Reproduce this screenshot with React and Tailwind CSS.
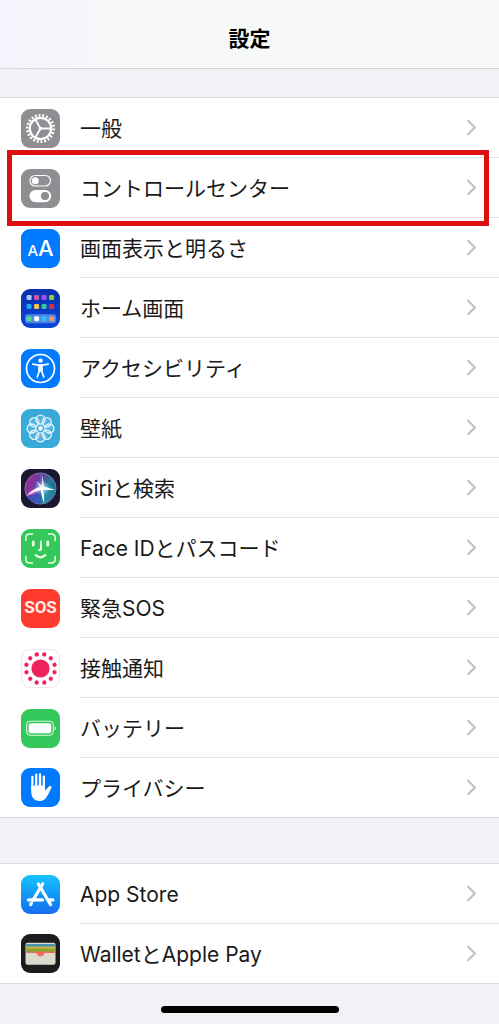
import { ChevronRight } from "lucide-react";

function Icon({ children, className }) {
    return (
        <svg viewBox="0 0 39 39" className={"h-[39px] w-[39px] shrink-0 rounded-[9px] " + className} aria-hidden="true">
            {children}
        </svg>
    )
}

function GeneralIcon() {
    return (
        <Icon className="bg-[#8e8e93]">
            <g fill="none" stroke="#fff">
                <circle cx="19.5" cy="19.5" r="13.2" strokeWidth="2.8" pathLength="88" strokeDasharray="2 2" />
                <circle cx="19.5" cy="19.5" r="10.7" strokeWidth="2.2" />
                <path d="M19.5 19.5H30M19.5 19.5L14.2 10.3M19.5 19.5L14.2 28.7" strokeWidth="1.8" />
            </g>
            <circle cx="19.5" cy="19.5" r="1.8" fill="#fff" />
        </Icon>
    )
}

function ControlCenterIcon() {
    return (
        <Icon className="bg-[#8e8e93]">
            <rect x="9" y="6.5" width="20.5" height="10.5" rx="5.25" fill="none" stroke="#fff" strokeWidth="1.2" />
            <circle cx="14.3" cy="11.8" r="3.5" fill="#fff" />
            <rect x="8.4" y="21" width="21.8" height="12.2" rx="6.1" fill="#fff" />
            <circle cx="24" cy="27.1" r="4.1" fill="#8e8e93" />
        </Icon>
    )
}

function DisplayIcon() {
    return (
        <span className="flex h-[39px] w-[39px] shrink-0 items-baseline justify-center rounded-[9px] bg-[#007aff] leading-[38px] font-medium text-white" aria-hidden="true">
            <span className="text-[15px]">A</span>
            <span className="text-[22px]">A</span>
        </span>
    )
}

function HomeScreenIcon() {
    const rows = [
        { y: 6, colors: ["#a9c8ff", "#d8579a", "#9a55ee", "#8fca3c"] },
        { y: 15, colors: ["#19a9f5", "#f7c544", "#32c6a4", "#d62f4c"] },
        { y: 27.2, colors: ["#55d98a", "#ffffff", "#38bdf8", "#e59a63"] },
    ]
    return (
        <Icon className="bg-linear-to-b from-[#0a2fae] to-[#0b46d8]">
            <rect x="4" y="25.2" width="31" height="9" rx="2.5" fill="#4b86e8" />
            {rows.map((row) => row.colors.map((color, i) => (
                <rect key={color} x={5.6 + i * 7.5} y={row.y} width="5" height="5" rx="1.3" fill={color} />
            )))}
        </Icon>
    )
}

function AccessibilityIcon() {
    return (
        <Icon className="bg-[#007aff]">
            <circle cx="19.5" cy="19.5" r="14" fill="none" stroke="#fff" strokeWidth="1.7" />
            <circle cx="19.5" cy="11.6" r="2.2" fill="#fff" />
            <path d="M17.4 15.6H21.6V22.4H17.4Z" fill="#fff" />
            <path d="M11.8 15.2L17.5 16.2H21.5L27.2 15.2M18.3 17V22L16.2 28M20.7 17V22L22.8 28" fill="none" stroke="#fff" strokeWidth="1.7" strokeLinecap="round" />
        </Icon>
    )
}

function WallpaperIcon() {
    return (
        <Icon className="bg-[#38a9d9]">
            <g fill="#ffffff22" stroke="#e4f6ff" strokeWidth="1.4">
                {[0, 45, 90, 135, 180, 225, 270, 315].map((angle) => (
                    <circle key={angle} cx="19.5" cy="10.6" r="4.5" transform={`rotate(${angle} 19.5 19.5)`} />
                ))}
            </g>
            <circle cx="19.5" cy="19.5" r="2.4" fill="#e4f6ff" />
        </Icon>
    )
}

function SiriIcon() {
    return (
        <Icon className="bg-[#19182f]">
            <defs>
                <linearGradient id="siriOrb" x1="0" y1="0.2" x2="1" y2="0.8">
                    <stop offset="0" stopColor="#a8238c" />
                    <stop offset="0.35" stopColor="#6b3fa6" />
                    <stop offset="0.65" stopColor="#207f9c" />
                    <stop offset="1" stopColor="#253a86" />
                </linearGradient>
                <radialGradient id="siriGlow">
                    <stop offset="0" stopColor="#fff" />
                    <stop offset="0.4" stopColor="#d9eaff" stopOpacity="0.6" />
                    <stop offset="1" stopColor="#8ac8ff" stopOpacity="0" />
                </radialGradient>
            </defs>
            <circle cx="19.5" cy="19.5" r="15.6" fill="url(#siriOrb)" stroke="#8f88b4" strokeWidth="0.8" />
            <path d="M19 4.2C22 8 23 14 22 19C27 15 31 17 34.6 20C33 29 27 34 21 34.8C24 27 22 23 21 20Z" fill="#2bc4b6" opacity="0.4" />
            <path d="M6 28C8 31 12 34.5 19 35C20 30 20 26 20.5 21C15 22 10 24 6 28Z" fill="#3a49c8" opacity="0.6" />
            <path d="M5 26C10 20 16 18 21 19C17 24 12 27 5 26Z" fill="#ff64c8" opacity="0.6" />
            <circle cx="21" cy="19" r="8" fill="url(#siriGlow)" />
            <path d="M6 27C11 21 15 19 21 17.5C26 18 30 20 34 21C29 21 25 21 22 20.5C23 25 23.5 29 23 34C21 29 20.5 25 20 21C15 22 10 24 6 27Z" fill="#fff" />
            <path d="M20 19L15 12L21 17L21.5 6L23 18Z" fill="#eef5ff" />
        </Icon>
    )
}

function FaceIdIcon() {
    return (
        <Icon className="bg-[#34c759]">
            <g fill="none" stroke="#e9ffe9" strokeLinecap="round" strokeLinejoin="round">
                <path d="M4.8 11.5V9Q4.8 5 8.8 5H11.5M27.5 5H30.2Q34.2 5 34.2 9V11.5M34.2 27.5V30Q34.2 34 30.2 34H27.5M11.5 34H8.8Q4.8 34 4.8 30V27.5" strokeWidth="1.6" />
                <path d="M12.2 13V16.2M26.8 13V16.2" strokeWidth="2.8" />
                <path d="M20 12.5V19.3Q20 21.2 18 21.2" strokeWidth="2" />
                <path d="M14.6 26.2Q19.5 30.4 24.4 26.2" strokeWidth="2.2" />
            </g>
        </Icon>
    )
}

function SosIcon() {
    return (
        <span className="flex h-[39px] w-[39px] shrink-0 items-center justify-center rounded-[9px] bg-[#ff3b30] font-[Roboto,sans-serif] text-[17px] font-bold text-[#fff1e8]" aria-hidden="true">
            SOS
        </span>
    )
}

function ExposureIcon() {
    return (
        <Icon className="border border-[#e8e8ec] bg-white">
            <g fill="#f0245c">
                <circle cx="19.5" cy="19.5" r="9.6" />
                {[15, 45, 75, 105, 135, 165, 195, 225, 255, 285, 315, 345].map((angle) => (
                    <circle key={angle} cx="19.5" cy="4.2" r="2.3" transform={`rotate(${angle} 19.5 19.5)`} />
                ))}
            </g>
        </Icon>
    )
}

function BatteryIcon() {
    return (
        <Icon className="bg-[#34c759]">
            <rect x="5.6" y="12.2" width="26.6" height="14" rx="3.6" fill="none" stroke="#d9f8df" strokeWidth="1.1" />
            <rect x="7.6" y="14.2" width="22.6" height="10" rx="1.8" fill="#fff" />
            <path d="M33.6 17V21.4Q35 20.8 35 19.2Q35 17.6 33.6 17Z" fill="#d9f8df" />
        </Icon>
    )
}

function PrivacyIcon() {
    return (
        <Icon className="bg-[#007aff]">
            <path d="M11.4 9V21M15.2 6.6V19M19 6.4V19M22.8 8.6V21" fill="none" stroke="#fff" strokeWidth="2.3" strokeLinecap="round" />
            <path d="M10.2 17.5H24V22.6C25.6 21.6 26.6 19.8 27.8 18.6C29 17.5 31 18.2 30.4 19.7C29 22.8 27.6 26 25.6 29C24 31.6 21.8 33 18.6 33C13 33 10.2 29 10.2 23.5Z" fill="#fff" />
        </Icon>
    )
}

function AppStoreIcon() {
    return (
        <Icon className="bg-linear-to-b from-[#1cc2fb] to-[#1a6cf1]">
            <g fill="none" stroke="#fff" strokeWidth="3.2" strokeLinecap="round">
                <path d="M21.6 9L12 25.3M10.4 28.3L9.7 29.6" />
                <path d="M17.4 9L29.6 29.6" />
                <path d="M7.4 24.9H21.5M28.2 24.9H31.8" />
            </g>
        </Icon>
    )
}

function WalletIcon() {
    return (
        <Icon className="bg-[#1c1c1e]">
            <defs>
                <clipPath id="walletCards">
                    <rect x="4.5" y="8.8" width="30" height="22" rx="2" />
                </clipPath>
            </defs>
            <g clipPath="url(#walletCards)">
                <rect x="4" y="8" width="31" height="23" fill="#dcdacd" />
                <rect x="5.2" y="10" width="28.6" height="3" fill="#4796ad" />
                <rect x="5.2" y="12.6" width="28.6" height="2.6" fill="#d0b344" />
                <rect x="5.2" y="14.6" width="28.6" height="3.4" fill="#82a72c" />
                <path d="M5.2 17.6H33.8V19H24.2C23 19 22.8 22.4 19.5 22.4C16.2 22.4 16 19 14.8 19H5.2Z" fill="#ed6a5e" />
            </g>
        </Icon>
    )
}

const systemItems = [
    { label: "一般", icon: <GeneralIcon /> },
    { label: "コントロールセンター", icon: <ControlCenterIcon />, highlighted: true },
    { label: "画面表示と明るさ", icon: <DisplayIcon /> },
    { label: "ホーム画面", icon: <HomeScreenIcon /> },
    { label: "アクセシビリティ", icon: <AccessibilityIcon /> },
    { label: "壁紙", icon: <WallpaperIcon /> },
    { label: "Siriと検索", icon: <SiriIcon /> },
    { label: "Face IDとパスコード", icon: <FaceIdIcon /> },
    { label: "緊急SOS", icon: <SosIcon /> },
    { label: "接触通知", icon: <ExposureIcon /> },
    { label: "バッテリー", icon: <BatteryIcon /> },
    { label: "プライバシー", icon: <PrivacyIcon /> },
]

const storeItems = [
    { label: "App Store", icon: <AppStoreIcon /> },
    { label: "WalletとApple Pay", icon: <WalletIcon /> },
]

function SettingsGroup({ items }) {
    return (
        <ul className="border-y border-[#dcdce0] bg-white">
            {items.map((item) => (
                <li key={item.label} className="group relative">
                    <a href="#" className="flex items-center gap-5 pl-[21px]">
                        {item.icon}
                        <span className="flex h-[60px] grow items-center justify-between border-b border-[#e4e4e7] pr-3.5 group-last:h-[59px] group-last:border-b-0">
                            <span className="pt-0.5 text-[21px] leading-7">{item.label}</span>
                            <ChevronRight className="h-[27px] w-[27px] text-[#c4c4c7]" strokeWidth={2.1} aria-hidden="true" />
                        </span>
                    </a>
                    {item.highlighted && (
                        <div className="pointer-events-none absolute -top-2 -bottom-2 right-2.5 left-[7px] z-10 border-[5px] border-[#de1010]"></div>
                    )}
                </li>
            ))}
        </ul>
    )
}

function App() {
    return (
        <div className="flex min-h-screen flex-col bg-[#f2f1f6] font-[Inter,'Noto_Sans_CJK_JP',sans-serif] text-[#1a1a1a]" lang="ja">
            <header className="border-b border-[#d3d4d6] bg-linear-to-r from-[#f3f3fc] to-[#f7f8f8] to-25% pt-6 pb-3.5">
                <h1 className="text-center text-[21px] leading-[30px] font-bold text-black">設定</h1>
            </header>
            <main className="flex grow flex-col gap-[45px] pt-7">
                <SettingsGroup items={systemItems} />
                <SettingsGroup items={storeItems} />
            </main>
            <footer className="flex justify-center pt-5 pb-[11px]">
                <div className="h-[7px] w-[178px] rounded-full bg-black"></div>
            </footer>
        </div>
    )
}

export default App
